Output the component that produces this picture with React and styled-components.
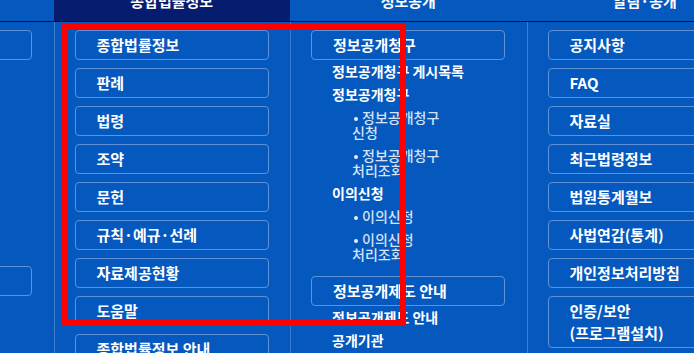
import React from "react";
import styled, { createGlobalStyle } from "styled-components";

const GlobalStyle = createGlobalStyle`
  html, body {
    margin: 0;
    padding: 0;
    background: #0559be;
    overflow: hidden;
  }
  body {
    font-family: "Noto Sans CJK KR", "Noto Sans", "Liberation Sans", sans-serif;
    color: #ffffff;
    word-break: keep-all;
  }
  * { box-sizing: border-box; }
`;

const Viewport = styled.div`
  position: relative;
  width: 694px;
  height: 353px;
  overflow: hidden;
  background: #0559be;
`;

/* the page is scrolled: content starts left of / above the viewport */
const Scroller = styled.div`
  margin-left: -183px;
  margin-top: -21px;
  width: 946px;
`;

const Header = styled.div`
  display: grid;
  grid-template-columns: repeat(4, 236.5px);
  height: 43px;
  border-bottom: 1px solid #0b0f2a;
`;

const Tab = styled.div`
  display: flex;
  align-items: center;
  justify-content: center;
  font-size: 15px;
  font-weight: 700;
  color: #ffffff;
  white-space: nowrap;
  background: ${(p) => (p.$active ? "#061c6e" : "transparent")};
`;

const Body = styled.div`
  display: grid;
  grid-template-columns: repeat(4, 236.5px);
  align-items: stretch;
  height: 340px;
`;

const Column = styled.div`
  border-left: 1px solid #3b7bd0;
  padding: 8px 21.5px 0 20px;
  display: flex;
  flex-direction: column;
`;

const MenuButton = styled.div`
  border: 1px solid #5f92d8;
  border-radius: 4px;
  padding: 3px 10px 3px 21px;
  line-height: 22px;
  font-size: 15px;
  font-weight: 700;
  color: #ffffff;
  margin-top: ${(p) => (p.$space != null ? `${p.$space}px` : "8px")};
  &:first-child {
    margin-top: 0;
  }
`;

const LinkList = styled.ul`
  list-style: none;
  margin: 0;
  padding: 0 0 0 21px;
`;

const LinkItem = styled.li`
  padding: 4px 0;
  line-height: 15px;
  font-size: 14px;
  font-weight: ${(p) => (p.$depth === 2 ? 500 : 700)};
  color: ${(p) => (p.$depth === 2 ? "#d6e3f6" : "#ffffff")};
  margin-left: ${(p) => (p.$depth === 2 ? "20px" : "0")};
  max-width: ${(p) => (p.$depth === 2 ? "104px" : "none")};
  white-space: ${(p) => (p.$depth === 2 ? "normal" : "nowrap")};
  ${(p) =>
    p.$depth === 2 &&
    `
    &::before {
      content: "";
      display: inline-block;
      width: 4px;
      height: 4px;
      border-radius: 50%;
      background: #e6eefa;
      margin: 0 4px 0 2px;
      vertical-align: middle;
    }
  `}
`;

const RedFrame = styled.div`
  position: absolute;
  left: 62px;
  top: 24px;
  width: 344px;
  height: 302px;
  border: 6px solid #ff0000;
  pointer-events: none;
`;

const tabs = ["법원 홈페이지 바로", "종합법률정보", "정보공개", "알림·공개"];

const col0Links = [
  "사법부 소개",
  "법원 연혁",
  "조직 안내",
  "법원 위치",
  "전자민원",
  "전자소송",
  "사건검색",
  "법원경매",
];

const col1 = [
  "종합법률정보",
  "판례",
  "법령",
  "조약",
  "문헌",
  "규칙·예규·선례",
  "자료제공현황",
  "도움말",
  "종합법률정보 안내",
];

const col2Links = [
  { t: "정보공개청구 게시목록", d: 1 },
  { t: "정보공개청구", d: 1 },
  { t: "정보공개청구 신청", d: 2 },
  { t: "정보공개청구 처리조회", d: 2 },
  { t: "이의신청", d: 1 },
  { t: "이의신청", d: 2 },
  { t: "이의신청 처리조회", d: 2 },
];

const col2Links2 = [
  { t: "정보공개제도 안내", d: 1 },
  { t: "공개기관", d: 1 },
  { t: "비공개대상정보", d: 1 },
];

const col3 = [
  ["공지사항"],
  ["FAQ"],
  ["자료실"],
  ["최근법령정보"],
  ["법원통계월보"],
  ["사법연감(통계)"],
  ["개인정보처리방침"],
  ["인증/보안", "(프로그램설치)"],
];

export default function App() {
  return (
    <>
      <GlobalStyle />
      <Viewport>
        <Scroller>
          <Header>
            {tabs.map((t, i) => (
              <Tab key={i} $active={i === 1}>
                {t}
              </Tab>
            ))}
          </Header>
          <Body>
            <Column>
              <MenuButton>법원 안내</MenuButton>
              <LinkList>
                {col0Links.map((t, i) => (
                  <LinkItem key={i} $depth={1}>
                    {t}
                  </LinkItem>
                ))}
              </LinkList>
              <MenuButton $space={22}>전자민원 안내</MenuButton>
            </Column>
            <Column>
              {col1.map((t, i) => (
                <MenuButton key={i}>{t}</MenuButton>
              ))}
            </Column>
            <Column>
              <MenuButton>정보공개청구</MenuButton>
              <LinkList>
                {col2Links.map((l, i) => (
                  <LinkItem key={i} $depth={l.d}>
                    {l.t}
                  </LinkItem>
                ))}
              </LinkList>
              <MenuButton $space={10}>정보공개제도 안내</MenuButton>
              <LinkList>
                {col2Links2.map((l, i) => (
                  <LinkItem key={i} $depth={l.d}>
                    {l.t}
                  </LinkItem>
                ))}
              </LinkList>
            </Column>
            <Column>
              {col3.map((lines, i) => (
                <MenuButton key={i}>
                  {lines.map((l, j) => (
                    <React.Fragment key={j}>
                      {j > 0 && <br />}
                      {l}
                    </React.Fragment>
                  ))}
                </MenuButton>
              ))}
            </Column>
          </Body>
        </Scroller>
        <RedFrame />
      </Viewport>
    </>
  );
}
